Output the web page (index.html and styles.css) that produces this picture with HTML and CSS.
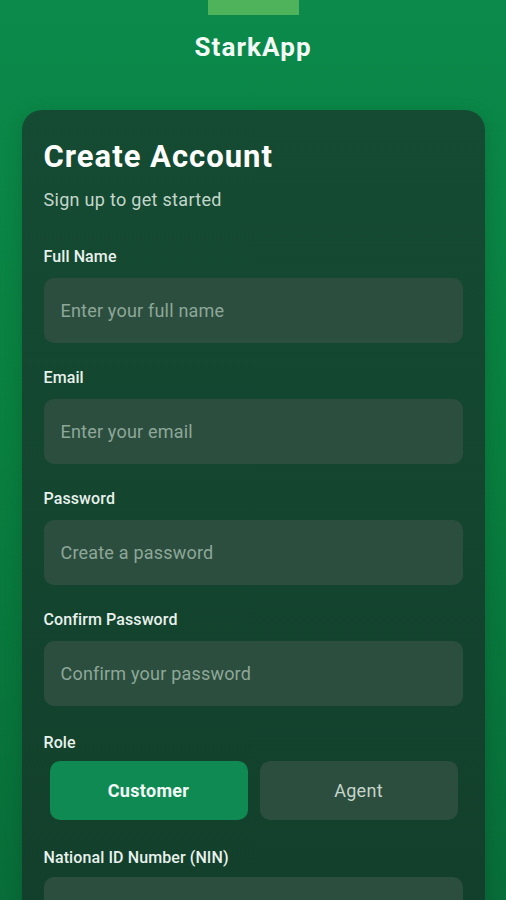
FILE: index.html
```html
<!DOCTYPE html>
<html lang="en">
<head>
<meta charset="utf-8">
<meta name="viewport" content="width=device-width, initial-scale=1">
<title>StarkApp - Create Account</title>
<link rel="stylesheet" href="styles.css">
</head>
<body>
<div class="screen">
  <header class="brand">
    <div class="brand-bar"></div>
    <div class="brand-name">StarkApp</div>
  </header>
  <main class="card">
    <h1 class="title">Create Account</h1>
    <p class="subtitle">Sign up to get started</p>

    <div class="field">
      <label class="label">Full Name</label>
      <div class="input"><span class="placeholder">Enter your full name</span></div>
    </div>
    <div class="field">
      <label class="label">Email</label>
      <div class="input"><span class="placeholder">Enter your email</span></div>
    </div>
    <div class="field">
      <label class="label">Password</label>
      <div class="input"><span class="placeholder">Create a password</span></div>
    </div>
    <div class="field">
      <label class="label">Confirm Password</label>
      <div class="input"><span class="placeholder">Confirm your password</span></div>
    </div>
    <div class="field field-role">
      <label class="label">Role</label>
      <div class="roles">
        <div class="role role-active">Customer</div>
        <div class="role">Agent</div>
      </div>
    </div>
    <div class="field field-nin">
      <label class="label">National ID Number (NIN)</label>
      <div class="input"><span class="placeholder"></span></div>
    </div>
  </main>
</div>
</body>
</html>
```

FILE: styles.css
```css
html, body {
  margin: 0;
  padding: 0;
}
body {
  font-family: Roboto, "Liberation Sans", Arial, sans-serif;
  background: linear-gradient(180deg, #0b8a4b 0%, #09803f 45%, #086d39 100%);
  min-height: 900px;
  overflow: hidden;
}
.screen {
  display: flex;
  flex-direction: column;
  align-items: center;
  height: 900px;
}
.brand {
  display: flex;
  flex-direction: column;
  align-items: center;
}
.brand-bar {
  width: 91px;
  height: 15px;
  background: #4eb35a;
}
.brand-name {
  margin-top: 17px;
  color: #f2fbf5;
  font-size: 26px;
  line-height: 30px;
  font-weight: 700;
  letter-spacing: 1.1px;
}
.card {
  box-sizing: border-box;
  width: 463px;
  margin-top: 48px;
  flex: 1;
  border-radius: 20px 20px 0 0;
  background: linear-gradient(180deg, #154b33 0%, #123f2b 100%);
  padding: 27px 22px 0 22px;
  box-shadow: 0 4px 18px rgba(0, 0, 0, 0.15);
}
.title {
  margin: 0;
  color: #ffffff;
  font-size: 31px;
  line-height: 40px;
  font-weight: 700;
  letter-spacing: 1px;
}
.subtitle {
  margin: 11px 0 0 0;
  color: #c3d6ca;
  font-size: 18px;
  line-height: 24px;
  letter-spacing: 0.3px;
}
.field {
  margin-top: 25px;
}
.subtitle + .field {
  margin-top: 35px;
}
.label {
  display: block;
  color: #e8f1ec;
  font-size: 16px;
  line-height: 20px;
  font-weight: 500;
  letter-spacing: 0.1px;
}
.input {
  box-sizing: border-box;
  margin-top: 11px;
  height: 65px;
  border-radius: 10px;
  background: #2c4e3e;
  display: flex;
  align-items: center;
  padding: 0 17px;
}
.placeholder {
  color: #8ea799;
  font-size: 18px;
  letter-spacing: 0.2px;
}
.field-role {
  margin-top: 27px;
}
.roles {
  margin-top: 8px;
  padding: 0 5px 0 6px;
  display: grid;
  grid-template-columns: 1fr 1fr;
  gap: 12px;
}
.role {
  height: 59px;
  border-radius: 10px;
  background: #2c4e3e;
  color: #c6d4cb;
  font-size: 18px;
  letter-spacing: 0.3px;
  display: flex;
  align-items: center;
  justify-content: center;
}
.role-active {
  background: #0e8a52;
  color: #f4fbf7;
  font-weight: 700;
}
.field-nin {
  margin-top: 28px;
}
.field-nin .input {
  margin-top: 9px;
}
```
